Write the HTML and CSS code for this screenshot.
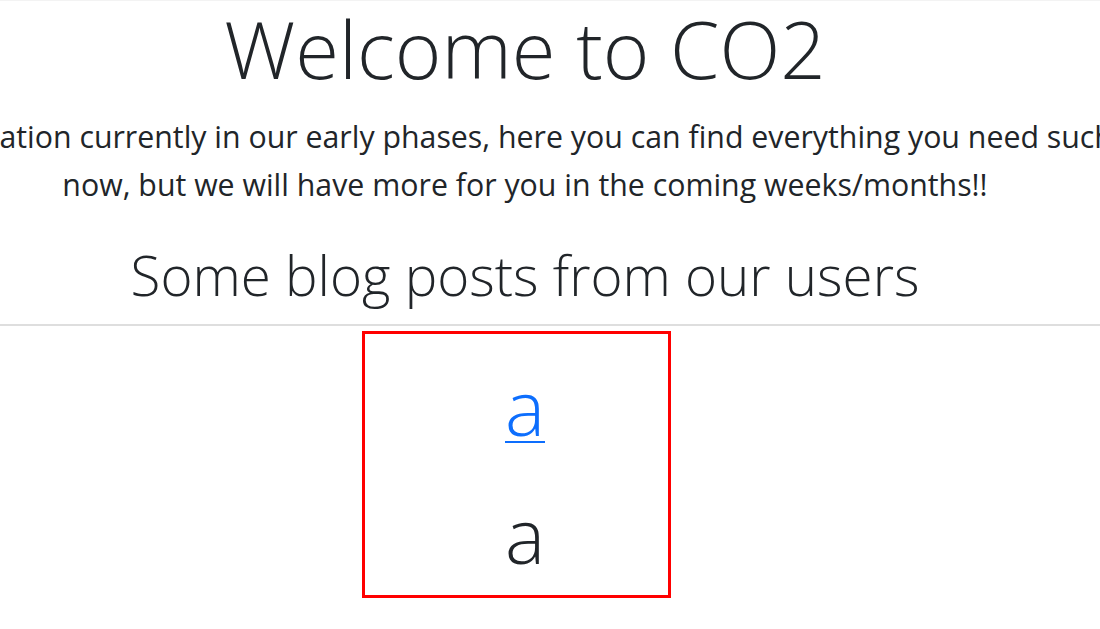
FILE: index.html
```html
<!DOCTYPE html>
<html lang="en">
<head>
<meta charset="utf-8">
<title>CO2</title>
<link rel="stylesheet" href="styles.css">
</head>
<body>
  <header class="intro">
    <h1 class="title">Welcome to CO2</h1>
    <p class="lead">We are an organization currently in our early phases, here you can find everything you need such as blog posts<br>now, but we will have more for you in the coming weeks/months!!</p>
    <h2 class="subtitle">Some blog posts from our users</h2>
  </header>
  <hr class="divider">
  <main class="posts">
    <article class="post">
      <a class="post-link" href="#">a</a>
      <p class="post-body">a</p>
    </article>
  </main>
</body>
</html>
```
FILE: styles.css
```css
html, body {
  margin: 0;
  padding: 0;
  background: #fff;
  overflow-x: hidden;
}

body {
  border-top: 1px solid #f3f3f3;
  color: #212529;
  font-family: "Open Sans", "Noto Sans", sans-serif;
}

.intro {
  width: 1050px;
  display: flex;
  flex-direction: column;
  align-items: center;
  text-align: center;
}

.title {
  margin: 0 0 16px;
  font-size: 79.6px;
  font-weight: 300;
  line-height: 1.2;
}

.lead {
  margin: 0;
  font-size: 30.3px;
  font-weight: 400;
  line-height: 48px;
  white-space: nowrap;
}

.subtitle {
  margin: 34px 0 0;
  font-size: 54.7px;
  font-weight: 300;
  line-height: 1.2;
}

.divider {
  margin: 16px 0 0;
  border: 0;
  border-top: 2px solid #dedede;
  height: 0;
}

.posts {
  width: 1033px;
  display: flex;
  justify-content: center;
  padding-top: 5px;
}

.post {
  width: 286px;
  height: 233px;
  padding: 28px 0 0 17px;
  border: 3px solid #ff0000;
  display: flex;
  flex-direction: column;
  align-items: center;
  gap: 37px;
}

.post-link,
.post-body {
  margin: 0;
  font-size: 75.5px;
  font-weight: 300;
  line-height: 1.2;
}

.post-link {
  color: #0d6efd;
  text-decoration: underline;
  text-decoration-thickness: 2px;
  text-underline-offset: 5px;
}
```
